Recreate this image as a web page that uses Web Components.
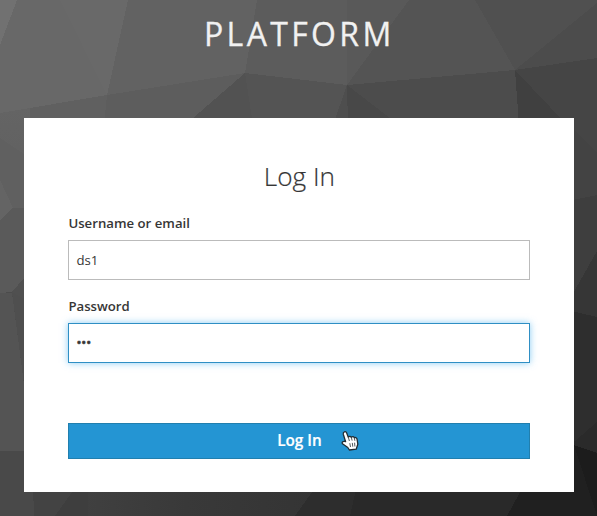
<!DOCTYPE html>
<html lang="en"><head><meta charset="utf-8"><title>Log In</title>
<style>html,body{margin:0;height:100%;overflow:hidden}body{font-family:"Open Sans","Noto Sans",sans-serif;color:#363636}</style></head>
<body>
<login-page>
  <login-card heading="Log In">
    <login-field label="Username or email" value="ds1"></login-field>
    <login-field label="Password" value="•••" focused></login-field>
    <login-button>Log In</login-button>
  </login-card>
</login-page>
<script>
class Base extends HTMLElement{
  connectedCallback(){ if(!this.shadowRoot) this.attachShadow({mode:'open'}).innerHTML=this.view(); }
  attr(n){ return this.getAttribute(n)||''; }
}
customElements.define('poly-backdrop',class extends Base{view(){return `
<style>:host{display:block}svg{display:block;width:100%;height:100%}</style>
<svg viewBox="0 0 597 516" preserveAspectRatio="none" shape-rendering="crispEdges">
<defs>
<linearGradient id="l" x1="0" y1="0" x2="0" y2="1"><stop offset="0" stop-color="#646464"/><stop offset="1" stop-color="#5f5f5f"/></linearGradient>
<linearGradient id="b" x1="0" x2="1" y1="0" y2="0"><stop offset="0" stop-color="#424242"/><stop offset=".5" stop-color="#393939"/><stop offset="1" stop-color="#343434"/></linearGradient>
</defs>
<rect width="597" height="516" fill="#4c4c4c"/>
<path d="M0 0H128L107 95 0 113Z" fill="#686868"/>
<path d="M0 0H17L0 45Z" fill="#717171"/>
<path d="M60 0H128L107 95Z" fill="#696969"/>
<path d="M128 0H257L245 73 107 95Z" fill="#626262"/>
<path d="M257 0H347V85L245 73Z" fill="#5c5c5c"/>
<path d="M347 0H409L347 85Z" fill="#595959"/>
<path d="M409 0H475L515 70 347 85Z" fill="#545454"/>
<path d="M475 0H597V3L515 70Z" fill="#505050"/>
<path d="M597 3V58L515 70Z" fill="#4c4c4c"/>
<path d="M0 113L107 95 104 125H0Z" fill="#606060"/>
<path d="M107 95L245 73 185 125H104Z" fill="#5d5d5d"/>
<path d="M245 73L253 125H185Z" fill="#525252"/>
<path d="M245 73L347 85 333 125H253Z" fill="#545454"/>
<path d="M347 85L348 125H333Z" fill="#4e4e4e"/>
<path d="M347 85L399 125H348Z" fill="#484848"/>
<path d="M347 85L515 70 519 125H399Z" fill="#4c4c4c"/>
<path d="M515 70L567 125H519Z" fill="#404040"/>
<path d="M515 70L597 58V153L567 125Z" fill="#454545"/>
<path d="M0 113L30 108V208H13L0 180Z" fill="url(#l)"/>
<path d="M0 138L30 158V208H13L0 180Z" fill="#606060"/>
<path d="M0 180L13 208 0 220Z" fill="#646464"/>
<path d="M13 208H30V271L12 292 0 293V220Z" fill="#5a5a5a"/>
<path d="M12 292L30 271V302Z" fill="#505050"/>
<path d="M12 292L30 302V430Z" fill="#4f4f4f"/>
<path d="M0 293H12L30 430V451H0Z" fill="#545454"/>
<path d="M0 451H33L34 516H0Z" fill="#494949"/>
<path d="M33 485H78L55 516H34Z" fill="#434343"/>
<path d="M78 485H317L295 516H55Z" fill="url(#b)"/>
<path d="M77 485H88V516H55Z" fill="#3e3e3e"/>
<path d="M317 485H357L350 516H295Z" fill="#2d2d2d"/>
<path d="M357 485H524L507 516H350Z" fill="#292929"/>
<path d="M524 485H580V516H507Z" fill="#202020"/>
<path d="M567 123L597 153V195L567 201Z" fill="#434343"/>
<path d="M567 201L597 195V251L567 304Z" fill="#3e3e3e"/>
<path d="M567 304L597 251V317L567 310Z" fill="#363636"/>
<path d="M567 310L597 317V422L567 448Z" fill="#2e2e2e"/>
<path d="M567 448L597 422V453L574 445Z" fill="#2a2a2a"/>
<path d="M567 443L597 453V516H567Z" fill="#202020"/>
<path d="M574 445L597 453V516Z" fill="#1c1c1c"/>
</svg>`}});
customElements.define('login-page',class extends Base{view(){return `
<style>:host{display:grid;grid-template:516px/597px}poly-backdrop,.c{grid-area:1/1}.c{display:flex;flex-direction:column;z-index:1}
h1{margin:0;height:118px;box-sizing:border-box;padding-top:12px;padding-left:204px;font-weight:400;font-size:32px;line-height:43px;letter-spacing:3.35px;color:#f1f1f1;white-space:nowrap;-webkit-text-stroke:.3px #f1f1f1}
.r{padding-left:24.3px}</style>
<poly-backdrop></poly-backdrop><div class="c"><h1>PLATFORM</h1><div class="r"><slot></slot></div></div>`}});
customElements.define('login-card',class extends Base{view(){return `
<style>:host{display:block;width:550.2px;height:374px;box-sizing:border-box;padding:40px 44px 0 44.1px;background:#fff}
h2{margin:0 0 19px;font-weight:300;font-size:26.2px;line-height:36px;text-align:center;color:#363636;-webkit-text-stroke:.2px #363636}</style>
<h2>${this.attr('heading')}</h2><slot></slot>`}});
customElements.define('login-field',class extends Base{view(){return `
<style>:host{display:block;height:83px}
label{display:block;font-size:13.2px;font-weight:600;line-height:20px;height:27px}
.i{box-sizing:border-box;height:39.5px;border:1px solid #bbb;padding:0 7px;font-size:13.2px;line-height:39px;background:#fff}
:host([focused]) .i{border-color:#2f8fc4;box-shadow:0 0 7px rgba(60,170,235,.6);line-height:37px;-webkit-text-stroke:.6px #363636}
:host([focused]){height:100px}</style>
<label>${this.attr('label')}</label><div class="i">${this.attr('value')}</div>`}});
customElements.define('login-button',class extends Base{view(){return `
<style>:host{display:flex;position:relative;height:36px;box-sizing:border-box;border:1px solid #217fae;background:#2495d3;color:#fff;align-items:center;justify-content:center;font-size:15.3px;font-weight:600;line-height:34px;cursor:pointer;margin-top:27px}
span{position:relative;top:-1px;-webkit-text-stroke:.2px #fff}
svg{position:absolute;left:272px;top:6px;width:18px;height:21px}</style>
<span><slot></slot></span><svg viewBox="0 0 18 21"><path d="M4.6 11.7L2.3 4.2C1.7 1.7 4.8.7 5.7 3L7.3 7.2C8.3 6.1 9.7 6.3 10.3 7.3 11.5 6.3 12.8 6.6 13.3 7.7 14.7 7.1 15.8 7.9 16.1 9.3L16.8 14.2 15.2 19.2 8.4 20 6.8 17.5 1.5 13.8C.3 12.2 2.4 10.8 4.6 11.7Z" fill="#fff" stroke="#222c32" stroke-width="1.3" stroke-linejoin="round"/><path d="M7.4 7.5L8.4 11M10.4 7.6L11.1 10.6M13.3 8L13.9 10.8M8.8 13.2L9.5 17M11.3 12.9L11.8 16.7M13.6 12.7L13.9 16.5" fill="none" stroke="#222c32" stroke-width=".8"/></svg>`}});
</script></body></html>
